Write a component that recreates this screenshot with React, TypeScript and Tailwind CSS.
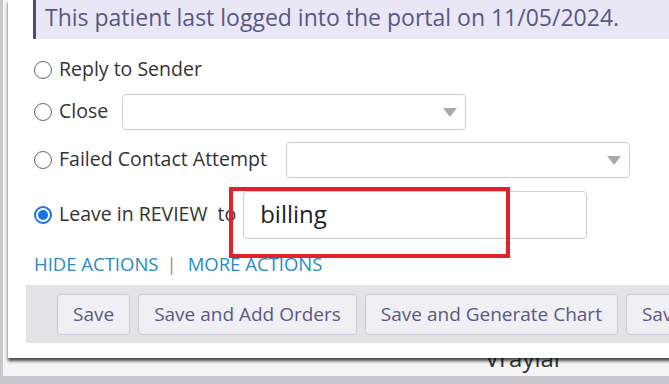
import React from "react";

function Radio({ checked = false }: { checked?: boolean }) {
  return checked ? (
    <span className="w-[18px] h-[18px] rounded-full border-[2px] border-[#1a73e8] bg-white flex items-center justify-center shrink-0">
      <span className="w-[10px] h-[10px] rounded-full bg-[#1a73e8]" />
    </span>
  ) : (
    <span className="w-[18px] h-[18px] rounded-full border-[1.5px] border-[#666] bg-white shrink-0" />
  );
}

function Select({ className }: { className: string }) {
  return (
    <div
      className={`h-[36px] border border-[#cfcfd3] rounded-[4px] bg-white flex items-center justify-end pr-[8px] ${className}`}
    >
      <svg width="14" height="9" viewBox="0 0 14 9">
        <path d="M0 0 L14 0 L7 9 Z" fill="#a9a9b1" />
      </svg>
    </div>
  );
}

export default function App() {
  const buttons = ["Save", "Save and Add Orders", "Save and Generate Chart", "Save and Close"];

  return (
    <div
      className="w-[669px] h-[384px] overflow-hidden bg-[#c9c6cc] relative"
      style={{ fontFamily: '"Open Sans", "Noto Sans", sans-serif' }}
    >
      {/* page behind the dialog */}
      <div className="ml-[3px] h-[376px] bg-[#f4f4f4] flex flex-col justify-end pl-[482px]">
        <span className="text-[24px] leading-none text-[#333] pb-[6px]">Vraylar</span>
      </div>

      {/* dialog */}
      <div className="absolute left-[8px] top-0 w-[720px] h-[358px] bg-white shadow-[0_3px_3px_rgba(0,0,0,0.7)]">
        <div className="ml-[25px] h-[39px] bg-[#e9e7f5] border-l-[3px] border-[#4c4b7d] pl-[9px] flex items-center">
          <span className="text-[23px] leading-none text-[#585784] -mt-[5px]">
            This patient last logged into the portal on 11/05/2024.
          </span>
        </div>

        <div className="pl-[26px] text-[19.5px] leading-none text-[#333]">
          <div className="mt-[19px] h-[24px] flex items-center">
            <Radio />
            <span className="ml-[7px] -mt-[2px]">Reply to Sender</span>
          </div>

          <div className="mt-[12px] h-[36px] flex items-center">
            <Radio />
            <span className="ml-[7px] -mt-[2px]">Close</span>
            <Select className="ml-[14px] w-[344px]" />
          </div>

          <div className="mt-[12px] h-[36px] flex items-center">
            <Radio />
            <span className="ml-[7px] -mt-[2px]">Failed Contact Attempt</span>
            <Select className="ml-[19px] w-[344px]" />
          </div>

          <div className="mt-[13px] h-[48px] flex items-center">
            <Radio checked />
            <span className="ml-[7px] -mt-[2px]">Leave in REVIEW</span>
            <span className="ml-[10px] -mt-[2px]">to</span>
            <div className="ml-[7px] w-[344px] h-[48px] border border-[#cfcfd3] rounded-[4px] bg-white flex items-center pl-[16px]">
              <span className="text-[24px] text-[#222] -mt-[3px]">billing</span>
            </div>
          </div>

          <div className="mt-[15px] h-[20px] flex items-center text-[18.5px] text-[#2a8bc4]">
            <span>HIDE ACTIONS</span>
            <span className="ml-[8px] text-[#a88a7c]">|</span>
            <span className="ml-[11px]">MORE ACTIONS</span>
          </div>
        </div>

        <div className="mt-[11px] ml-[18px] h-[58px] bg-[#e3e3e6] flex items-start pt-[9px] pl-[31px] gap-[8px]">
          {buttons.map((b) => (
            <button
              key={b}
              className="h-[41px] px-[15px] shrink-0 bg-[#f0eff3] border border-[#cdc9d3] rounded-[4px] text-[19px] leading-none text-[#5a5985]"
            >
              {b}
            </button>
          ))}
        </div>

        {/* annotation frame */}
        <div className="absolute left-[221px] top-[187px] w-[281px] h-[71px] border-[4px] border-[#e3212a]" />
      </div>
    </div>
  );
}
